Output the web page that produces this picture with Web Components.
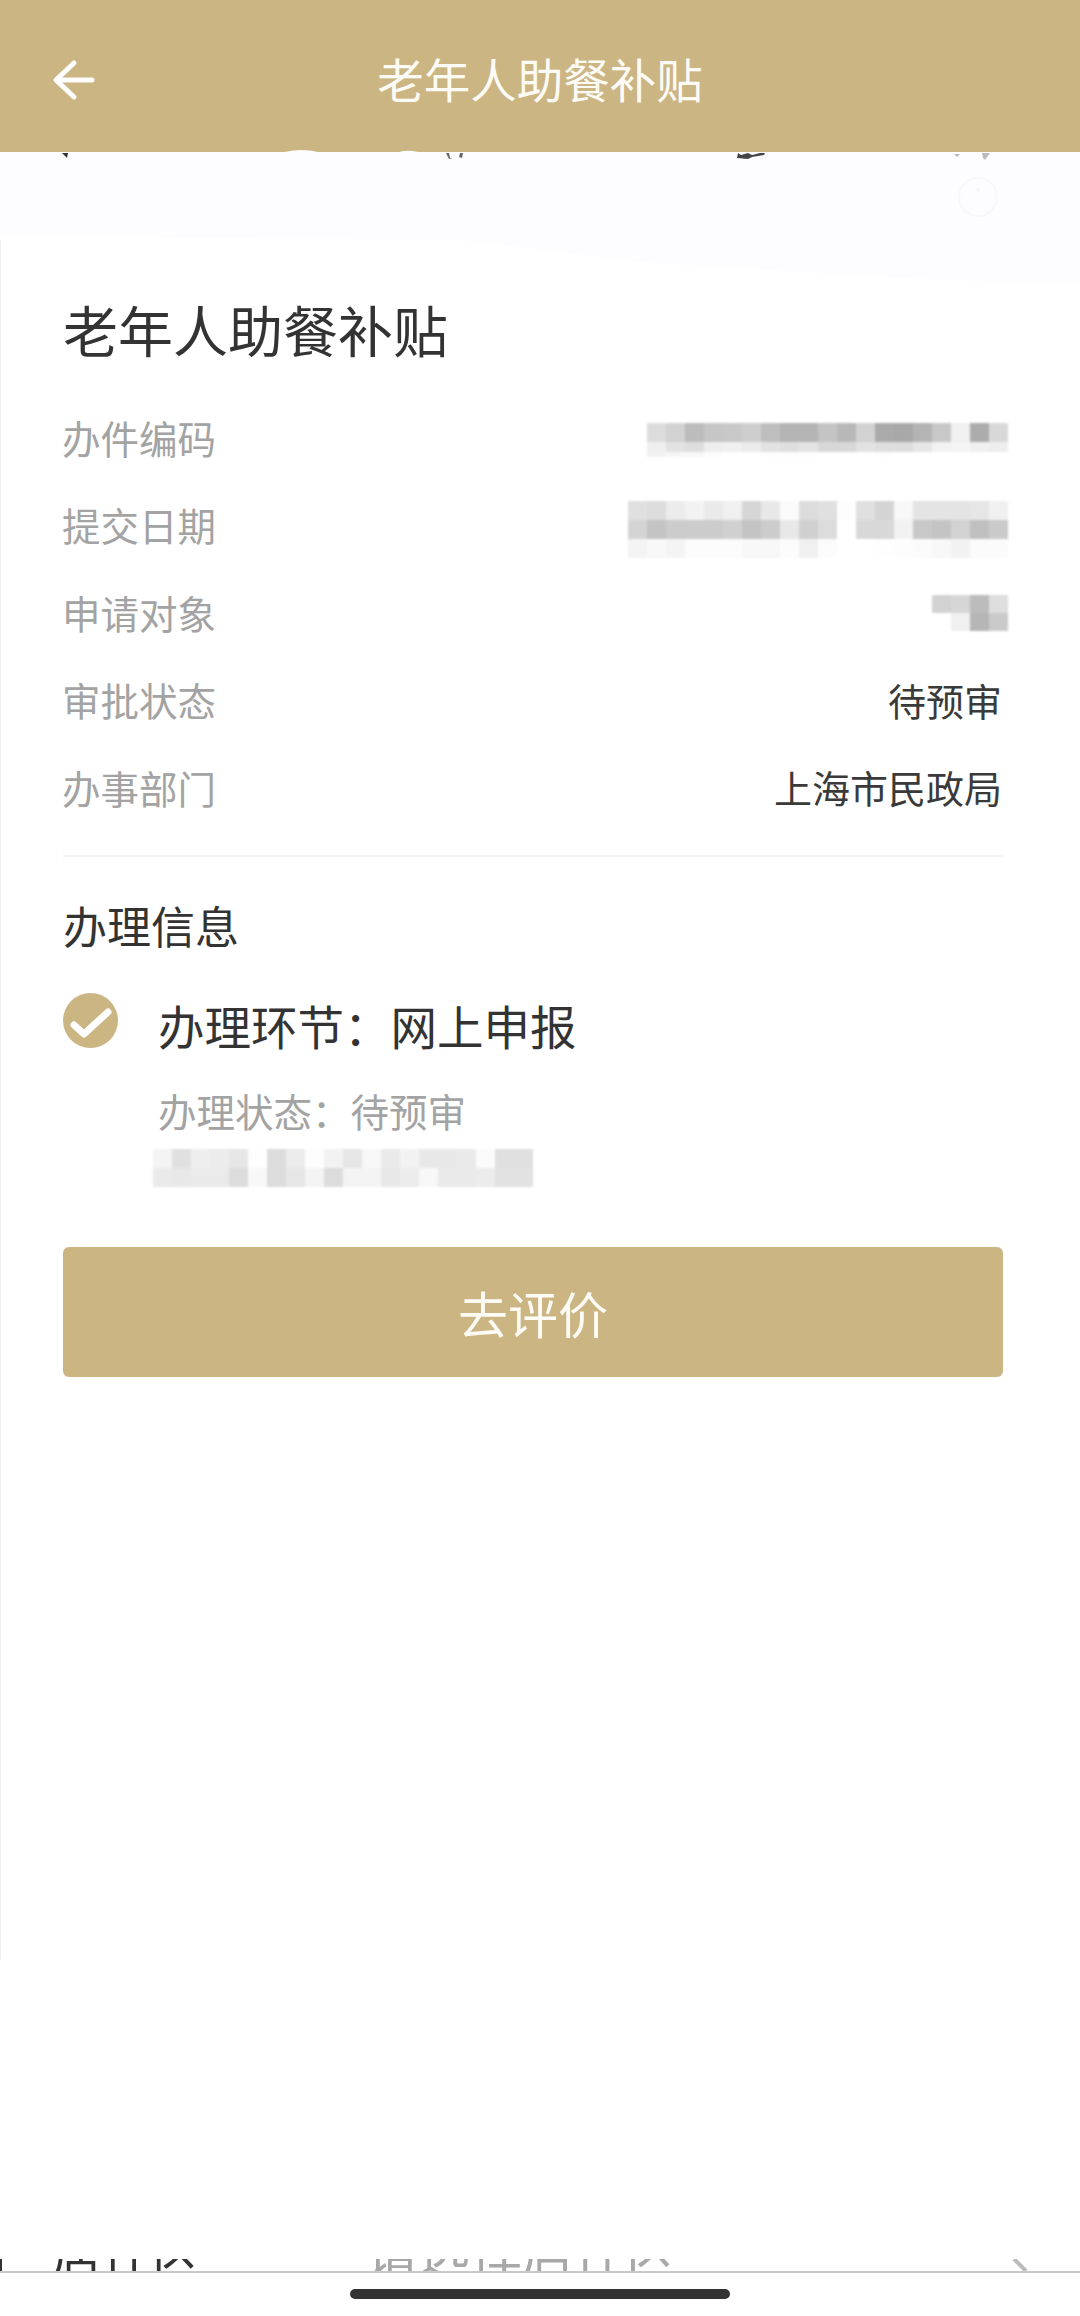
<!DOCTYPE html>
<html lang="zh-CN">
<head>
<meta charset="utf-8">
<title>老年人助餐补贴</title>
<style>
    html, body {
        margin: 0;
        background: #fff;
        font-family: "Noto Sans CJK SC", "Noto Sans", sans-serif;
    }
</style>
</head>
<body>
<app-shell>
    <nav-bar slot="top" title="老年人助餐补贴"></nav-bar>

    <h-title>老年人助餐补贴</h-title>

    <detail-row label="办件编码">
        <mosaic-block style="margin-top:6px" heights="19,10,5" rows="dc,d2,bc,c6,c8,ce,be,b4,b4,c4,b8,d2,aa,a8,b4,c8,f0,ac,d8;ef,e2,de,ee,f0,eb,e2,df,e4,d8,d8,e2,de,de,e6,f2,f4,f0,ee;f2,f6,f8,fc,ff,ff,fd,fd,fd,ff,ff,ff,fd,ff,ff,ff,ff,ff,ff"></mosaic-block>
    </detail-row>
    <detail-row label="提交日期">
        <mosaic-block style="margin-top:10px" heights="19,19,19" rows="e0,dc,ec,f2,ea,f0,d6,e8,fb,dc,e0,fd,e0,d4,f8,e4,e4,e4,e6,f0;d4,c4,cc,cc,cc,d0,c4,cc,e8,d0,dc,ff,d8,d8,f2,c8,c4,d2,c0,ca;f4,f8,f4,fc,fc,fc,f8,f8,fc,f0,fc,ff,ff,fe,fd,fb,f8,f2,fb,fb"></mosaic-block>
    </detail-row>
    <detail-row label="申请对象">
        <mosaic-block style="margin-top:2px" heights="18,18" rows="d2,d6,bc,de;ff,f0,b6,ca"></mosaic-block>
    </detail-row>
    <detail-row label="审批状态" value="待预审"></detail-row>
    <detail-row label="办事部门" value="上海市民政局"></detail-row>

    <h-rule></h-rule>
    <section-title>办理信息</section-title>

    <step-item heading="办理环节&#xFF1A;网上申报" status="办理状态&#xFF1A;待预审">
        <mosaic-block heights="19,19" rows="f4,e0,ee,ec,e6,fe,dc,ec,fd,f2,e6,f8,ea,f2,e8,e8,ea,fb,e0,e0;ea,e8,ea,ea,dc,f8,dc,e6,f4,dc,f4,f4,e8,ec,f8,ea,ea,ec,e2,e2"></mosaic-block>
    </step-item>

    <action-button>去评价</action-button>

    <clipped-row slot="bottom" label="居住区" hint="请选择居住区"></clipped-row>
    <home-bar slot="bottom"></home-bar>
</app-shell>

<script>
const GOLD = '#cbb583';

const shellTemplate = document.createElement('template');
shellTemplate.innerHTML = `
<style>
    :host {
        display: flex;
        flex-direction: column;
        position: relative;
        width: 1080px;
        height: 2316px;
        overflow: hidden;
        background: #fff;
        font-family: "Noto Sans CJK SC", "Noto Sans", sans-serif;
    }
    main {
        flex: 1;
        padding: 141px 72px 0 63px;
        position: relative;
    }
    .smear, .edge, .scraps {
        position: absolute;
        left: 0;
        top: 0;
    }
    .edge {
        top: 240px;
        width: 1px;
        height: 1720px;
        background: #efefef;
    }
    .scraps { z-index: 2; }
</style>
<svg class="smear" width="1080" height="300" viewBox="0 0 1080 300">
    <path d="M0 152H1080V285L900 278L640 262L460 240L200 238L0 234Z" fill="#fdfcfe"/>
    <circle cx="978" cy="197" r="19" fill="none" stroke="#f8f7f9" stroke-width="2"/>
    <circle cx="978" cy="190" r="2" fill="#f6f5f7"/>
</svg>
<div class="edge"></div>
<slot name="top"></slot>
<svg class="scraps" width="1080" height="170" viewBox="0 0 1080 170">
    <path d="M278 153Q295 150 300 150Q312 150 322 153ZM395 153Q405 150 412 151Q420 152 425 153Z" fill="#fdfcfe"/>
    <path d="M62 153L68 153L67 158Z" fill="#333"/>
    <path d="M446 153L449 153L450 158L453 158L449 159ZM460 153L463 153L462 158L459 157Z" fill="#666"/>
    <path d="M737 158L738 153L741 155L748 153L752 155L760 153L765 153L764 155L752 157L748 159Z" fill="#444"/>
    <path d="M954 154L960 154L957 157ZM982 153L990 153L985 160L983 158Z" fill="#bbb"/>
</svg>
<main><slot></slot></main>
<slot name="bottom"></slot>
`;

class AppShell extends HTMLElement {
    constructor() {
        super();
        this.attachShadow({ mode: 'open' }).append(shellTemplate.content.cloneNode(true));
    }
}

class NavBar extends HTMLElement {
    constructor() {
        super();
        this.attachShadow({ mode: 'open' }).innerHTML = `
<style>
    :host {
        display: grid;
        grid-template-columns: 1fr auto 1fr;
        align-items: center;
        height: 152px;
        padding-top: 4px;
        box-sizing: border-box;
        background: ${GOLD};
        color: #fdfbf5;
        position: relative;
        z-index: 1;
    }
    svg { margin: 4px 0 0 52px; display: block; }
    span { font-size: 46.5px; line-height: 60px; }
</style>
<svg width="44" height="44" viewBox="0 0 44 44" fill="none" stroke="#fff" stroke-width="5" stroke-linecap="round" stroke-linejoin="round">
    <path d="M40 22H5M22 5L4 22L22 39"/>
</svg>
<span>${this.getAttribute('title')}</span>
<div></div>`;
    }
}

class HTitle extends HTMLElement {
    constructor() {
        super();
        this.attachShadow({ mode: 'open' }).innerHTML = `
<style>
    :host {
        display: block;
        font-size: 55px;
        line-height: 70px;
        color: #333;
        margin-bottom: 30px;
    }
</style>
<slot></slot>`;
    }
}

class DetailRow extends HTMLElement {
    constructor() {
        super();
        const value = this.getAttribute('value');
        this.attachShadow({ mode: 'open' }).innerHTML = `
<style>
    :host {
        display: flex;
        justify-content: space-between;
        align-items: center;
        height: 87.5px;
        font-size: 38px;
    }
    .label { color: #a3a3a3; font-size: 38.5px; margin-left: -1px; }
    .value { color: #3a3a3a; padding-right: 6px; }
</style>
<span class="label">${this.getAttribute('label')}</span>
${value ? `<span class="value">${value}</span>` : '<slot></slot>'}`;
    }
}

// the blurred-out values of the screenshot: rows of grey cells, 19px wide
class MosaicBlock extends HTMLElement {
    connectedCallback() {
        const rows = this.getAttribute('rows').split(';').map(r => r.split(','));
        const heights = this.getAttribute('heights').split(',').map(h => h + 'px').join(' ');
        const cells = rows.flat().map(c => `<i style="background:#${c}${c}${c}"></i>`).join('');
        this.attachShadow({ mode: 'open' }).innerHTML = `
<style>
    :host { display: block; }
    div {
        display: grid;
        grid-template-columns: repeat(${rows[0].length}, 19px);
        grid-template-rows: ${heights};
        filter: blur(0.9px);
    }
</style>
<div>${cells}</div>`;
    }
}

class HRule extends HTMLElement {
    constructor() {
        super();
        this.attachShadow({ mode: 'open' }).innerHTML = `
<style>
    :host {
        display: block;
        height: 2px;
        margin: 24px 4px 38px 0;
        background: #f3f3f3;
    }
</style>`;
    }
}

class SectionTitle extends HTMLElement {
    constructor() {
        super();
        this.attachShadow({ mode: 'open' }).innerHTML = `
<style>
    :host {
        display: block;
        font-size: 44px;
        line-height: 60px;
        color: #333;
        margin-bottom: 35px;
    }
</style>
<slot></slot>`;
    }
}

class StepItem extends HTMLElement {
    constructor() {
        super();
        this.attachShadow({ mode: 'open' }).innerHTML = `
<style>
    :host {
        display: grid;
        grid-template-columns: 95px 1fr;
    }
    svg { display: block; margin-top: 3px; }
    h3 {
        margin: 0 0 25px;
        font-size: 46.5px;
        line-height: 70px;
        font-weight: 400;
        color: #333;
    }
    p {
        margin: 0 0 14px;
        font-size: 38.5px;
        line-height: 50px;
        color: #a3a3a3;
    }
    .hidden-text { margin-left: -5px; }
</style>
<svg width="55" height="55" viewBox="0 0 55 55">
    <circle cx="27.5" cy="27.5" r="27.5" fill="${GOLD}"/>
    <path d="M11 32L21 41L45 19" fill="none" stroke="#fff" stroke-width="7" stroke-linecap="round" stroke-linejoin="round"/>
</svg>
<div>
    <h3>${this.getAttribute('heading')}</h3>
    <p>${this.getAttribute('status')}</p>
    <div class="hidden-text"><slot></slot></div>
</div>`;
    }
}

class ActionButton extends HTMLElement {
    constructor() {
        super();
        this.attachShadow({ mode: 'open' }).innerHTML = `
<style>
    :host {
        display: flex;
        justify-content: center;
        align-items: center;
        height: 130px;
        margin: 60px 5px 0 0;
        border-radius: 6px;
        background: ${GOLD};
        color: #fdfbf5;
        font-size: 50px;
    }
</style>
<slot></slot>`;
    }
}

// the next page's form row, nearly scrolled out of view: only its bottom edge shows
class ClippedRow extends HTMLElement {
    constructor() {
        super();
        this.attachShadow({ mode: 'open' }).innerHTML = `
<style>
    :host {
        display: flex;
        align-items: flex-end;
        height: 12px;
        overflow: hidden;
        padding-left: 52px;
        font-size: 50px;
        line-height: 48px;
        border-bottom: 2px solid #c9c9c9;
        position: relative;
    }
    .label { color: #333; width: 314px; flex: none; margin-bottom: -4px; }
    .hint { color: #a8a8a8; font-size: 52px; line-height: 50px; flex: 1; margin-bottom: -4px; }
    svg { flex: none; margin-right: 46px; display: block; }
    .tick {
        position: absolute;
        left: 0;
        bottom: 0;
        width: 2px;
        height: 12px;
        background: #333;
    }
</style>
<span class="tick"></span>
<span class="label">${this.getAttribute('label')}</span>
<span class="hint">${this.getAttribute('hint')}</span>
<svg width="22" height="12" viewBox="0 0 22 12">
    <path d="M2 0L14 12" fill="none" stroke="#bbb" stroke-width="4"/>
</svg>`;
    }
}

class HomeBar extends HTMLElement {
    constructor() {
        super();
        this.attachShadow({ mode: 'open' }).innerHTML = `
<style>
    :host {
        display: flex;
        justify-content: center;
        height: 43px;
        padding-top: 16px;
        box-sizing: border-box;
        background: #fff;
    }
    div {
        width: 380px;
        height: 10px;
        border-radius: 5px;
        background: #333;
    }
</style>
<div></div>`;
    }
}

customElements.define('app-shell', AppShell);
customElements.define('nav-bar', NavBar);
customElements.define('h-title', HTitle);
customElements.define('detail-row', DetailRow);
customElements.define('mosaic-block', MosaicBlock);
customElements.define('h-rule', HRule);
customElements.define('section-title', SectionTitle);
customElements.define('step-item', StepItem);
customElements.define('action-button', ActionButton);
customElements.define('clipped-row', ClippedRow);
customElements.define('home-bar', HomeBar);
</script>
</body>
</html>
